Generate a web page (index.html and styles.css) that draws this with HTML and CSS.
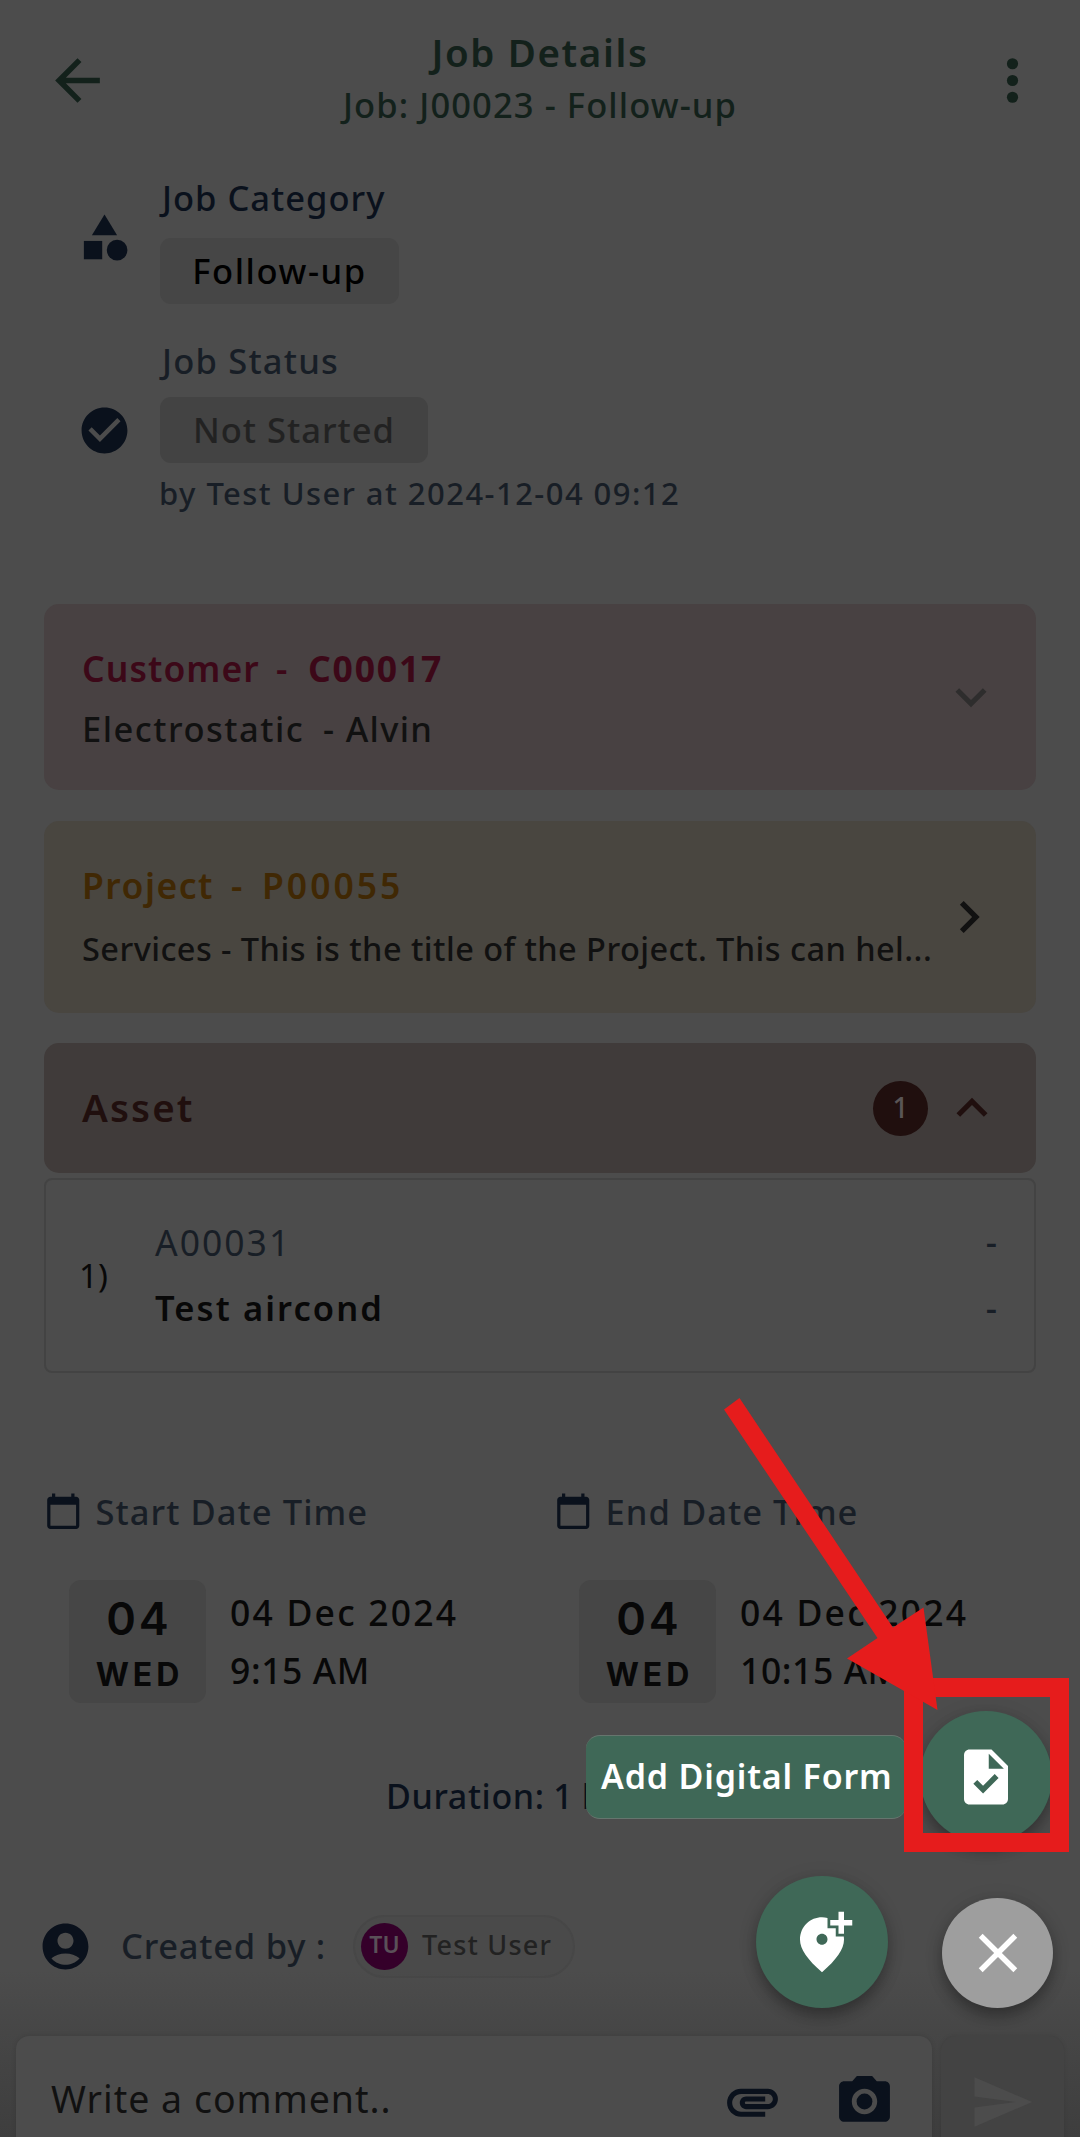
FILE: index.html
```html
<!DOCTYPE html>
<html lang="en">
<head>
<meta charset="utf-8">
<title>Job Details</title>
<link rel="stylesheet" href="styles.css">
</head>
<body>
<div class="screen">
  <header class="topbar">
    <svg class="icon-lg" viewBox="0 0 24 24"><path d="M20 11H7.83l5.59-5.59L12 4l-8 8 8 8 1.41-1.41L7.83 13H20v-2z"/></svg>
    <div class="heading">
      <h1>Job Details</h1>
      <p>Job: J00023 - Follow-up</p>
    </div>
    <svg class="icon-lg" viewBox="0 0 24 24"><circle cx="12" cy="6" r="2"/><circle cx="12" cy="12" r="2"/><circle cx="12" cy="18" r="2"/></svg>
  </header>

  <section class="info category">
    <svg class="icon-md" viewBox="0 0 24 24"><path d="M12 2 6.5 11h11z"/><circle cx="17.5" cy="17.5" r="4.5"/><path d="M3 13.5h8v8H3z"/></svg>
    <div class="info-body">
      <p class="label dark">Job Category</p>
      <span class="chip follow">Follow-up</span>
    </div>
  </section>

  <section class="info status">
    <svg class="icon-md" viewBox="0 0 24 24"><path d="M12 2C6.48 2 2 6.48 2 12s4.48 10 10 10 10-4.48 10-10S17.52 2 12 2zm-2 15-5-5 1.41-1.41L10 14.17l7.59-7.59L19 8l-9 9z"/></svg>
    <div class="info-body">
      <p class="label">Job Status</p>
      <span class="chip pending">Not Started</span>
      <p class="byline">by Test User at 2024-12-04 09:12</p>
    </div>
  </section>

  <section class="card customer">
    <div class="card-text">
      <h2><span class="kind">Customer</span><span class="dash">-</span><b>C00017</b></h2>
      <p><span class="company">Electrostatic</span><span class="person">- Alvin</span></p>
    </div>
    <svg class="chevron" viewBox="0 0 24 24"><path d="M16.59 8.59 12 13.17 7.41 8.59 6 10l6 6 6-6z"/></svg>
  </section>

  <section class="card project">
    <div class="card-text">
      <h2><span class="kind">Project</span><span class="dash">-</span><span class="code">P00055</span></h2>
      <p>Services - This is the title of the Project. This can hel...</p>
    </div>
    <svg class="chevron" viewBox="0 0 24 24"><path d="M10 6 8.59 7.41 13.17 12l-4.58 4.59L10 18l6-6z"/></svg>
  </section>

  <section class="card asset">
    <h2>Asset</h2>
    <span class="count">1</span>
    <svg class="chevron" viewBox="0 0 24 24"><path d="m12 8-6 6 1.41 1.41L12 10.83l4.59 4.58L18 14z"/></svg>
  </section>
  <div class="asset-item">
    <span class="index">1)</span>
    <div class="asset-name"><p class="asset-code">A00031</p><p class="asset-title">Test aircond</p></div>
    <div class="asset-meta"><p>-</p><p>-</p></div>
  </div>

  <section class="dates">
    <div class="date start">
      <h3><svg class="calendar" viewBox="0 0 24 24"><path d="M20 3h-1V1h-2v2H7V1H5v2H4C2.9 3 2 3.9 2 5v16c0 1.1.9 2 2 2h16c1.1 0 2-.9 2-2V5c0-1.1-.9-2-2-2zm0 18H4V8h16v13z"/></svg><span>Start Date Time</span></h3>
      <div class="date-row">
        <div class="tile"><span class="day">04</span><span class="weekday">WED</span></div>
        <div class="when"><p class="full">04 Dec 2024</p><p class="time">9:15 AM</p></div>
      </div>
    </div>
    <div class="date end">
      <h3><svg class="calendar" viewBox="0 0 24 24"><path d="M20 3h-1V1h-2v2H7V1H5v2H4C2.9 3 2 3.9 2 5v16c0 1.1.9 2 2 2h16c1.1 0 2-.9 2-2V5c0-1.1-.9-2-2-2zm0 18H4V8h16v13z"/></svg><span>End Date Time</span></h3>
      <div class="date-row">
        <div class="tile"><span class="day">04</span><span class="weekday">WED</span></div>
        <div class="when"><p class="full">04 Dec 2024</p><p class="time">10:15 AM</p></div>
      </div>
    </div>
  </section>

  <p class="duration">Duration: 1 hour</p>

  <section class="creator">
    <svg class="icon-md" viewBox="0 0 24 24"><path fill-rule="evenodd" d="M12 2C6.48 2 2 6.48 2 12s4.48 10 10 10 10-4.48 10-10S17.52 2 12 2zm0 4c1.93 0 3.5 1.57 3.5 3.5S13.93 13 12 13s-3.5-1.57-3.5-3.5S10.07 6 12 6zm0 14c-2.03 0-4.43-.82-6.14-2.88C7.55 15.8 9.68 15 12 15s4.45.8 6.14 2.12C16.43 19.18 14.03 20 12 20z"/></svg>
    <span class="created">Created by :</span>
    <span class="user"><span class="avatar">TU</span><span class="name">Test User</span></span>
  </section>

  <footer class="composer">
    <div class="input">
      <span class="placeholder">Write a comment..</span>
      <svg viewBox="0 0 24 24"><path d="M2 12.5C2 9.46 4.46 7 7.5 7H18c2.21 0 4 1.79 4 4s-1.79 4-4 4H9.5C8.12 15 7 13.88 7 12.5S8.12 10 9.5 10H17v2H9.41c-.55 0-.55 1 0 1H18c1.1 0 2-.9 2-2s-.9-2-2-2H7.5C5.57 9 4 10.57 4 12.5S5.57 16 7.5 16H17v2H7.5C4.46 18 2 15.54 2 12.5z"/></svg>
      <svg viewBox="0 0 24 24"><circle cx="12" cy="12" r="3.1"/><path d="M9 2 7.17 4H4c-1.1 0-2 .9-2 2v12c0 1.1.9 2 2 2h16c1.1 0 2-.9 2-2V6c0-1.1-.9-2-2-2h-3.17L15 2H9zm3 15c-2.76 0-5-2.24-5-5s2.24-5 5-5 5 2.24 5 5-2.24 5-5 5z"/></svg>
    </div>
    <div class="send"><svg viewBox="0 0 24 24"><path d="M2.01 21 23 12 2.01 3 2 10l15 2-15 2z"/></svg></div>
  </footer>

  <div class="tooltip">Add Digital Form</div>
  <div class="fab form"><svg viewBox="0 0 24 24"><path d="M14 2H6c-1.1 0-1.99.9-1.99 2L4 20c0 1.1.89 2 1.99 2H18c1.1 0 2-.9 2-2V8l-6-6zm-3.06 16L7.4 14.46l1.41-1.41 2.12 2.12 4.24-4.24 1.41 1.41L10.94 18zM13 9V3.5L18.5 9H13z"/></svg></div>
  <div class="fab location"><svg viewBox="0 0 24 24"><path d="M20 1v3h3v2h-3v3h-2V6h-3V4h3V1h2zm-8 12c1.1 0 2-.9 2-2s-.9-2-2-2-2 .9-2 2 .9 2 2 2zm2-9.75V7h3v3h2.92c.05.39.08.79.08 1.2 0 3.32-2.67 7.25-8 11.8-5.33-4.55-8-8.48-8-11.8C4 6.22 7.8 3 12 3c.68 0 1.35.08 2 .25z"/></svg></div>
  <div class="fab close"><svg viewBox="0 0 24 24"><path d="M19 6.41 17.59 5 12 10.59 6.41 5 5 6.41 10.59 12 5 17.59 6.41 19 12 13.41 17.59 19 19 17.59 13.41 12z"/></svg></div>

  <div class="highlight"></div>
  <svg class="pointer" viewBox="0 0 220 316"><path d="M19.5 2 4 13.5 157.500 242 127 262.500 217.500 314 203.500 211.500 173 231.500z"/></svg>
</div>
</body>
</html>
```
FILE: styles.css
```css
* { box-sizing: border-box; }
body, h1, h2, h3, p { margin: 0; font-weight: 500; }
body { background: #4c4c4c; font-family: "Noto Sans", sans-serif; font-weight: 500; }
svg { display: block; flex: none; fill: currentColor; }

.screen {
  position: relative;
  display: flex;
  flex-direction: column;
  width: 1080px;
  height: 2137px;
  overflow: hidden;
  background: #4c4c4c;
  color: #0a111c;
  white-space: nowrap;
}

.icon-lg { width: 67px; height: 67px; }
.icon-md { width: 55px; height: 55px; }

.topbar {
  display: flex;
  justify-content: space-between;
  height: 176px;
  padding: 29px 34px 0 44px;
  color: #13211b;
}
.topbar .icon-lg { margin-top: 18px; }
.heading { display: flex; flex-direction: column; align-items: center; gap: 8px; margin-right: 10px; }
.heading h1 { font-size: 38.5px; line-height: 46px; font-weight: 600; letter-spacing: 1.6px; }
.heading p { font-size: 34.5px; line-height: 44px; letter-spacing: 1.1px; }

.info { display: flex; gap: 28px; padding-left: 77px; }
.category { height: 163px; }
.category .icon-md { margin-top: 34px; }
.status { height: 265px; }
.status .icon-md { margin-top: 64px; }
.info-body { display: flex; flex-direction: column; align-items: flex-start; }
.label { font-size: 34.5px; line-height: 44px; letter-spacing: 1.2px; text-indent: 2px; color: #181e26; }
.label.dark { color: #0a111c; letter-spacing: 1px; }
.chip {
  display: flex;
  justify-content: center;
  height: 66px;
  border-radius: 11px;
  background: #464646;
  font-size: 34.5px;
  line-height: 65px;
  color: #000;
}
.follow { width: 239px; margin-top: 18px; letter-spacing: 1.6px; }
.pending { width: 268px; margin-top: 14px; letter-spacing: 1px; background: #434343; color: #222; }
.byline { margin-top: 10px; font-size: 31px; line-height: 41px; letter-spacing: 1.45px; text-indent: -1px; color: #181e26; }

.card {
  display: flex;
  align-items: center;
  margin: 0 44px;
  padding-left: 38px;
  border-radius: 15px;
}
.card-text { flex: 1; align-self: flex-start; }
.card h2 { display: flex; font-size: 35.5px; line-height: 46px; font-weight: 600; }
.card p { display: flex; font-size: 34.5px; line-height: 44px; color: #111; }

.customer { height: 186px; padding-right: 34px; background: #484142; }
.customer .card-text { padding-top: 41px; }
.customer h2 { color: #3c0818; }
.customer .kind { width: 194px; letter-spacing: 1.05px; }
.customer .dash { width: 32px; }
.customer b { font-weight: 700; letter-spacing: 1.8px; }
.customer p { margin-top: 16px; }
.company { width: 241px; letter-spacing: 1.5px; }
.person { letter-spacing: 1.3px; }
.customer .chevron { width: 62px; height: 62px; color: #2e2d2d; }

.project { height: 192px; margin-top: 31px; padding-right: 35px; background: #494640; }
.project .card-text { padding-top: 41px; }
.project h2 { color: #402804; }
.project .kind { width: 149px; letter-spacing: 1.5px; }
.project .dash { width: 31px; }
.project .code { letter-spacing: 3px; }
.project p { margin-top: 19px; font-size: 32.5px; letter-spacing: .45px; }
.project .chevron { width: 64px; height: 64px; margin-left: -20px; color: #111; }

.asset { height: 130px; margin-top: 30px; padding-right: 33px; background: #403b3a; color: #200f0e; }
.asset h2 { flex: 1; font-size: 38.5px; line-height: 48px; padding-bottom: 2px; letter-spacing: 2.1px; }
.asset .chevron { width: 62px; height: 62px; }
.count {
  width: 55px;
  height: 55px;
  margin-right: 13px;
  border-radius: 50%;
  background: #200f0e;
  color: #5a5555;
  font-size: 28px;
  line-height: 53px;
  text-align: center;
}

.asset-item {
  display: flex;
  align-items: center;
  height: 195px;
  margin: 5px 44px 0;
  padding: 0 37px 1px 33px;
  border: 2.5px solid #434343;
  border-radius: 8px;
}
.asset-item p { line-height: 48px; }
.index { width: 76px; font-size: 33px; font-weight: 400; color: #080808; }
.asset-name { flex: 1; display: grid; gap: 18px; }
.asset-code { font-size: 35.5px; font-weight: 400; letter-spacing: 2px; color: #181e26; }
.asset-title { font-size: 34.5px; font-weight: 600; letter-spacing: 2.1px; color: #080808; }
.asset-meta { display: grid; gap: 18px; font-size: 35px; color: #181e26; }

.dates { display: grid; grid-template-columns: 510px 1fr; margin: 117px 0 0 44px; }
.date h3 { display: flex; align-items: center; gap: 13px; height: 44px; font-size: 34.5px; line-height: 44px; letter-spacing: 1.05px; color: #181e26; }
.calendar { width: 38.5px; height: 38.5px; margin-bottom: 2px; color: #0a111c; }
.date-row { display: flex; gap: 24px; margin: 46px 0 0 25px; }
.tile {
  display: flex;
  flex-direction: column;
  align-items: center;
  gap: 10px;
  width: 137px;
  height: 123px;
  padding-top: 14px;
  border-radius: 12px;
  background: #464646;
  color: #080808;
  font-family: Inter, sans-serif;
}
.day { font-size: 45px; line-height: 50px; font-weight: 600; letter-spacing: 3px; margin-right: -3px; }
.weekday { font-size: 32px; line-height: 42px; font-weight: 700; letter-spacing: 4px; margin-right: -4px; }
.when { display: grid; gap: 10px; align-content: start; padding-top: 8px; font-size: 35.5px; color: #080808; }
.when p { line-height: 48px; }
.full { letter-spacing: 2.2px; }
.time { letter-spacing: .6px; }

.duration { margin: 70px 0 0 386px; font-size: 34px; line-height: 46px; letter-spacing: .65px; word-spacing: -1px; }

.creator { display: flex; align-items: center; height: 63px; margin: 96px 0 0 38px; }
.created { width: 232px; margin-left: 28px; padding-bottom: 1px; font-size: 34.5px; line-height: 44px; letter-spacing: .75px; color: #181e26; }
.user { display: flex; align-items: center; gap: 14px; width: 222px; height: 63px; padding-left: 6px; border: 2px solid #474747; border-radius: 32px; background: #4a4a4a; }
.avatar { width: 47px; height: 47px; border-radius: 50%; background: #35002a; color: #5a5058; font-size: 23px; font-weight: 600; line-height: 42px; text-align: center; }
.name { font-size: 27px; line-height: 34px; letter-spacing: 1.2px; color: #222; padding-bottom: 3px; }

.composer {
  display: flex;
  align-items: flex-start;
  gap: 9px;
  height: 167px;
  margin-top: -8px;
  padding: 66px 16px 0;
  background: linear-gradient(rgba(62, 62, 62, 0) 0, rgba(62, 62, 62, .45) 66px, #3e3e3e 100%);
}
.input {
  flex: 1;
  display: flex;
  align-items: flex-start;
  gap: 51px;
  height: 120px;
  padding: 35px 37px 0 35px;
  border-radius: 13px;
  background: #4c4c4c;
  box-shadow: 0 0 5px rgba(0, 0, 0, .12);
}
.input svg { width: 61px; height: 61px; }
.placeholder { flex: 1; font-size: 37.5px; font-weight: 400; line-height: 56px; letter-spacing: 1px; color: #111; }
.send { width: 123px; height: 120px; padding: 33px 0 0 28px; border-radius: 15px; background: #434343; color: #4c4c4c; box-shadow: 0 0 4px rgba(0, 0, 0, .1); }
.send svg { width: 66px; height: 66px; }

/* Floating speed-dial actions above the page */
.tooltip {
  position: absolute;
  left: 586px;
  top: 1735px;
  width: 320px;
  height: 84px;
  padding-left: 15px;
  border-top: 1px solid #66756e;
  border-bottom: 1px solid #66756e;
  border-radius: 14px;
  background: #3f6857;
  color: #fff;
  font-size: 34px;
  font-weight: 600;
  line-height: 80px;
  letter-spacing: .81px;
}
.fab {
  position: absolute;
  display: grid;
  place-items: center;
  width: 132px;
  height: 132px;
  border-radius: 50%;
  background: #3f6857;
  color: #fff;
  box-shadow: 0 8px 14px rgba(0, 0, 0, .28), 0 2px 20px rgba(0, 0, 0, .1);
}
.fab svg { width: 66px; height: 66px; }
.form { left: 920px; top: 1711px; }
.location { left: 756px; top: 1876px; }
.close { left: 942px; top: 1898px; width: 111px; height: 110px; background: #9e9e9e; }

/* Callout */
.highlight { position: absolute; left: 904px; top: 1678px; width: 165px; height: 174px; border: 19px solid #e61c1c; }
.pointer { position: absolute; left: 720px; top: 1396px; width: 220px; height: 316px; color: #e61c1c; }
```
